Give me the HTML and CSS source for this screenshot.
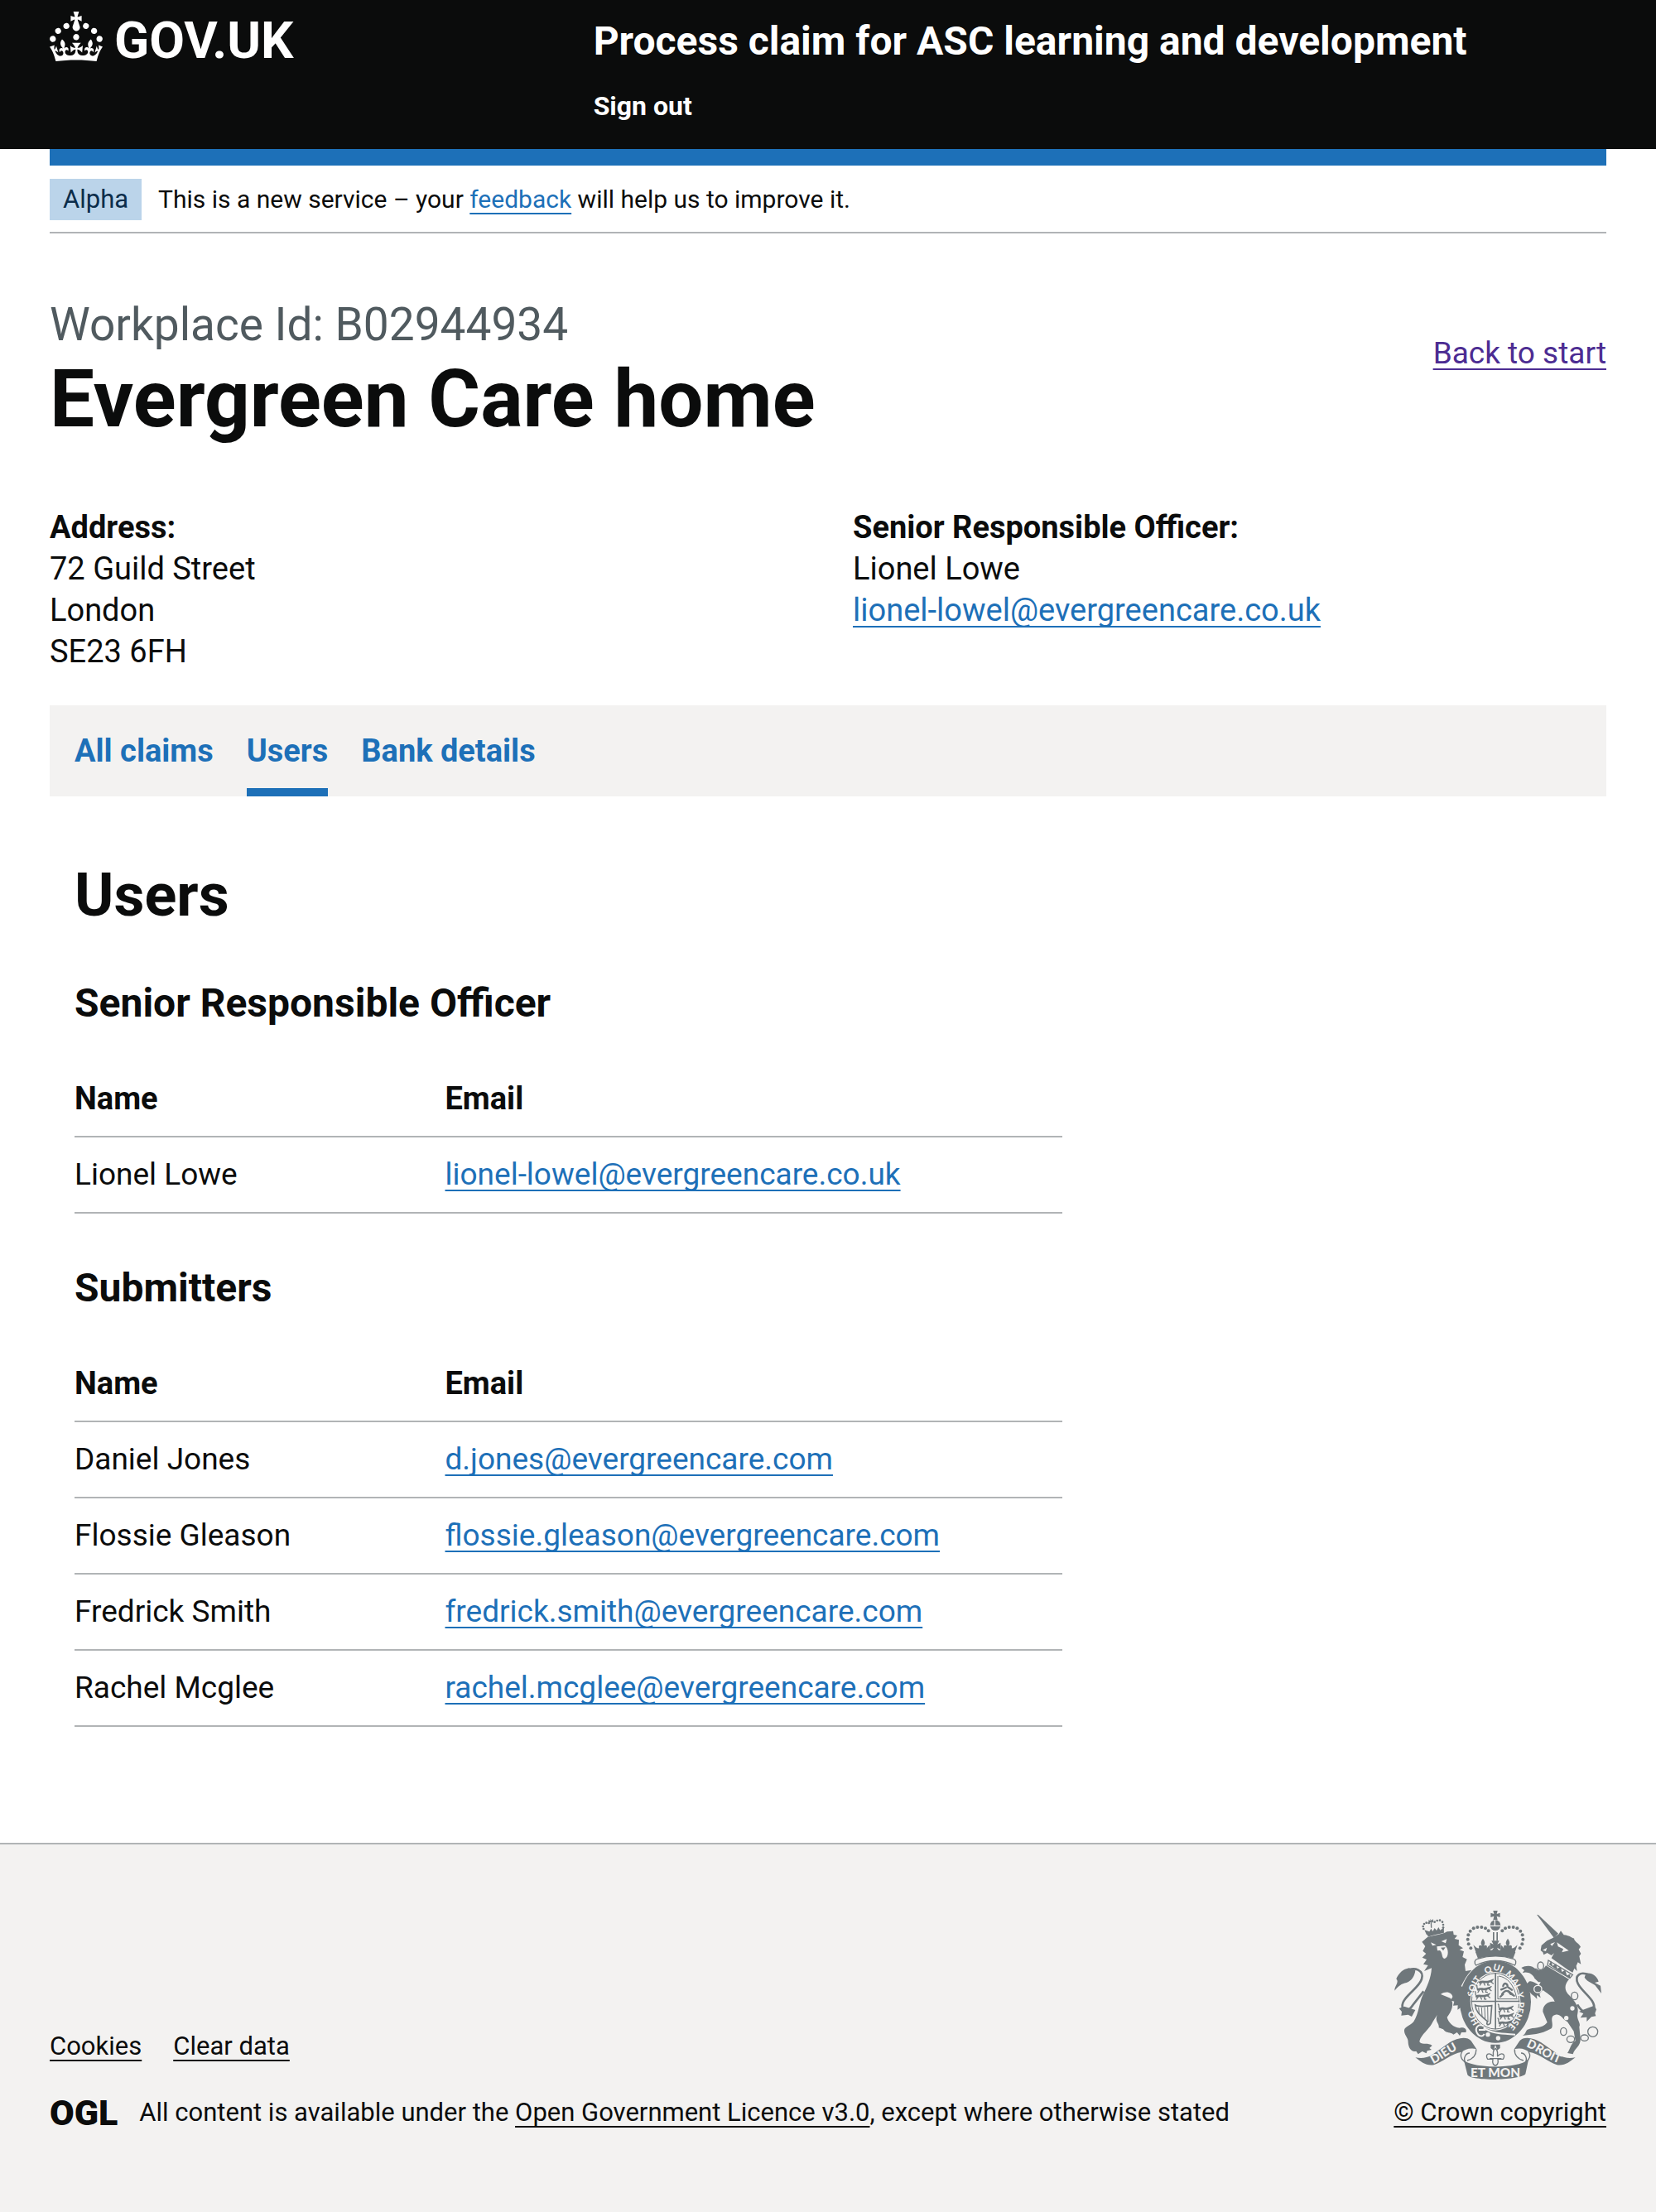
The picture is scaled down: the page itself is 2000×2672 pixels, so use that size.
FILE: index.html
```html
<!DOCTYPE html>
<html lang="en">
<head>
<meta charset="utf-8">
<meta name="viewport" content="width=device-width, initial-scale=1">
<title>Evergreen Care home – Users</title>
<link rel="stylesheet" href="styles.css">
</head>
<body>
<header class="header">
  <div class="container header-grid">
    <a class="logo" href="#">
      <svg class="crown" viewBox="0 0 32 30" aria-hidden="true"><path d="M22.6 10.4c-1 .4-2-.1-2.4-1-.4-.9.1-2 1-2.4.9-.4 2 .1 2.4 1s-.1 2-1 2.4m-5.9 6.7c-.9.4-2-.1-2.4-1-.4-.9.1-2 1-2.4.9-.4 2 .1 2.4 1s-.1 2-1 2.4m10.8-3.7c-1 .4-2-.1-2.4-1-.4-.9.1-2 1-2.4.9-.4 2 .1 2.4 1s0 2-1 2.4m3.3 4.8c-1 .4-2-.1-2.4-1-.4-.9.1-2 1-2.4.9-.4 2 .1 2.4 1s-.1 2-1 2.4M17 4.7l2.3 1.2V2.5l-2.3.7-.2-.2.9-3h-3.4l.9 3-.2.2c-.1.1-2.3-.7-2.3-.7v3.4L15 4.7c.1.1.1.2.2.2l-1.3 4c-.1.2-.1.4-.1.6 0 1.1.8 2 1.9 2.2h.7c1-.2 1.9-1.1 1.9-2.1 0-.2 0-.4-.1-.6l-1.3-4c-.1-.2 0-.2.1-.3m-7.6 5.7c.9.4 2-.1 2.4-1 .4-.9-.1-2-1-2.4-.9-.4-2 .1-2.4 1s0 2 1 2.4m-5 3c.9.4 2-.1 2.4-1 .4-.9-.1-2-1-2.4-.9-.4-2 .1-2.4 1s.1 2 1 2.4m-3.2 4.8c.9.4 2-.1 2.4-1 .4-.9-.1-2-1-2.4-.9-.4-2 .1-2.4 1s0 2 1 2.4m14.8 11c4.4 0 8.6.3 12.3.8 1.1-4.5 2.4-7 3.7-8.8l-2.5-.9c.2 1.3.3 1.9 0 2.7-.4-.4-.8-1.1-1.1-2.3l-1.2 4c.7-.5 1.3-.8 2-.9-1.1 2.5-2.6 3.1-3.5 3-1.1-.2-1.7-1.2-1.5-2.1.3-1.2 1.5-1.5 2.1-.1 1.1-2.3-.8-3-2-2.3 1.9-1.9 2.1-3.5.6-5.6-2.1 1.6-2.1 3.2-1.2 5.5-1.2-1.4-3.2-.6-2.5 1.6.9-1.4 2.1-.5 1.9.8-.2 1.1-1.7 2.1-3.5 1.9-2.7-.2-2.9-2.1-2.9-3.6.7-.1 1.9.5 2.9 1.9l.4-4.3c-1.1 1.1-2.1 1.4-3.2 1.4.4-1.2 2.1-3 2.1-3h-5.4s1.7 1.9 2.1 3c-1.1 0-2.1-.2-3.2-1.4l.4 4.3c1-1.4 2.2-2 2.9-1.9-.1 1.5-.2 3.4-2.9 3.6-1.9.2-3.4-.8-3.5-1.9-.2-1.3 1-2.2 1.9-.8.7-2.3-1.2-3-2.5-1.6.9-2.2.9-3.9-1.2-5.5-1.5 2-1.3 3.7.6 5.6-1.2-.7-3.1 0-2 2.3.6-1.4 1.8-1.1 2.1.1.2.9-.3 1.9-1.5 2.1-.9.2-2.4-.5-3.5-3 .6 0 1.2.3 2 .9l-1.2-4c-.3 1.1-.7 1.9-1.1 2.3-.3-.8-.2-1.4 0-2.7l-2.9.9C1.3 23 2.6 25.5 3.7 30c3.7-.5 7.9-.8 12.3-.8"/></svg>
      <span>GOV.UK</span>
    </a>
    <div class="header-content">
      <a class="service-name" href="#">Process claim for ASC learning and development</a>
      <nav class="header-nav" aria-label="Account"><a href="#">Sign out</a></nav>
    </div>
  </div>
</header>

<div class="container">
  <div class="phase-banner">
    <strong class="tag">Alpha</strong>
    <span>This is a new service – your <a class="link" href="#">feedback</a> will help us to improve it.</span>
  </div>

  <main class="main">
    <div class="title-row">
      <div>
        <p class="caption">Workplace Id: B02944934</p>
        <h1 class="heading-xl">Evergreen Care home</h1>
      </div>
      <a class="link link-visited" href="#">Back to start</a>
    </div>

    <div class="details">
      <p><strong>Address:</strong><br>72 Guild Street<br>London<br>SE23 6FH</p>
      <p><strong>Senior Responsible Officer:</strong><br>Lionel Lowe<br><a class="link" href="#">lionel-lowel@evergreencare.co.uk</a></p>
    </div>

    <nav class="tabs" aria-label="Workplace">
      <a href="#">All claims</a>
      <a class="current" href="#" aria-current="page">Users</a>
      <a href="#">Bank details</a>
    </nav>

    <section class="users">
      <h2 class="heading-l">Users</h2>
      <h3 class="heading-m">Senior Responsible Officer</h3>
      <table class="table">
        <thead><tr><th scope="col">Name</th><th scope="col">Email</th></tr></thead>
        <tbody>
          <tr><td>Lionel Lowe</td><td><a class="link" href="#">lionel-lowel@evergreencare.co.uk</a></td></tr>
        </tbody>
      </table>
      <h3 class="heading-m">Submitters</h3>
      <table class="table">
        <thead><tr><th scope="col">Name</th><th scope="col">Email</th></tr></thead>
        <tbody>
          <tr><td>Daniel Jones</td><td><a class="link" href="#">d.jones@evergreencare.com</a></td></tr>
          <tr><td>Flossie Gleason</td><td><a class="link" href="#">flossie.gleason@evergreencare.com</a></td></tr>
          <tr><td>Fredrick Smith</td><td><a class="link" href="#">fredrick.smith@evergreencare.com</a></td></tr>
          <tr><td>Rachel Mcglee</td><td><a class="link" href="#">rachel.mcglee@evergreencare.com</a></td></tr>
        </tbody>
      </table>
    </section>
  </main>
</div>

<footer class="footer">
  <div class="container footer-row">
    <div>
      <nav class="footer-links" aria-label="Support links"><a href="#">Cookies</a><a href="#">Clear data</a></nav>
      <div class="licence">
        <span class="ogl">OGL</span>
        <span>All content is available under the <a href="#">Open Government Licence v3.0</a>, except where otherwise stated</span>
      </div>
    </div>
    <a class="copyright" href="#">
      <svg class="arms" viewBox="69 54 753 612" aria-hidden="true">
        <defs>
          <path id="garter" d="M438 501A102 118 0 0 1 438 270A102 118 0 0 1 438 501"/>
          <path id="dieu" d="M213 609C248 594 276 564 318 551"/>
          <path id="droit" d="M549 547C590 561 625 595 676 610"/>
          <g id="ribbon">
            <path d="M148 586C170 591 190 588 208 577L272 532C300 514 335 508 350 526L370 556C345 550 330 556 316 566C280 572 245 602 215 613C185 617 170 602 148 586Z"/>
            <path d="M318 564C308 580 312 592 330 604M368 556C370 575 358 592 336 597M330 604C320 590 330 570 345 570" fill="none" stroke="#6f777b" stroke-width="4"/>
          </g>
          <g id="arch">
            <circle cx="349" cy="190" r="6"/><circle cx="341" cy="175" r="6"/><circle cx="338" cy="158" r="6"/><circle cx="340" cy="142" r="6"/><circle cx="347" cy="128" r="6"/><circle cx="359" cy="118" r="6"/><circle cx="373" cy="114" r="6"/><circle cx="388" cy="114" r="6"/><circle cx="402" cy="118" r="6"/><circle cx="413" cy="127" r="6"/>
            <path d="M393 155C384 168 385 174 390 181C380 176 376 182 379 190C370 192 366 185 358 178L368 207H438V196L420 199L418 178C411 184 408 190 407 191C410 181 405 176 396 181C402 172 401 167 393 155Z"/>
          </g>
          <g id="leopard" fill="none" stroke="#6f777b" stroke-linecap="round">
            <path d="M2 10C12 3 22 12 34 7L44 4" stroke-width="8"/>
            <path d="M7 12L2 20M16 11L20 20M32 9L30 19L36 20M41 7L50 14M2 9C-6 2 2-6-4-8M44 3L50-1" stroke-width="4"/>
          </g>
        </defs>
        <g fill="#6f777b">
          <ellipse cx="438" cy="384" rx="129" ry="149"/>
          <ellipse cx="438" cy="382" rx="91" ry="106" fill="#f3f2f1"/>
          <ellipse cx="438" cy="382" rx="86" ry="101" fill="none" stroke="#6f777b" stroke-width="3"/>
          <path d="M436 280H441V484H436ZM350 380H526V385H350Z"/>
          <path d="M447 375V291M447 374H518M450 291C480 295 505 320 515 370" fill="none" stroke="#6f777b" stroke-width="3"/>
          <use href="#leopard" x="380" y="304"/><use href="#leopard" x="373" y="330"/><use href="#leopard" x="368" y="355"/>
          <use href="#leopard" x="452" y="401"/><use href="#leopard" x="454" y="427"/><use href="#leopard" x="451" y="452"/>
          <path d="M462 357C474 340 484 342 493 356M466 327C470 312 483 318 482 330L498 341M476 333L459 340M484 345L500 357M466 357L456 366M493 355L506 362" fill="none" stroke="#6f777b" stroke-width="7" stroke-linecap="round"/>
          <path d="M365 396C380 405 401 400 425 398L420 462C410 472 403 464 410 456C390 437 367 424 365 396Z" fill="none" stroke="#6f777b" stroke-width="5"/>
          <path d="M377 404L379 425M388 405L390 438M399 404L401 448M410 402L411 456" stroke="#6f777b" stroke-width="3"/>
          <g fill="#f3f2f1" class="motto garter-text" text-anchor="middle">
            <text><textPath href="#garter" startOffset="16%">HO</textPath></text>
            <text><textPath href="#garter" startOffset="34%">SOIT</textPath></text>
            <text><textPath href="#garter" startOffset="49%">QUI</textPath></text>
            <text><textPath href="#garter" startOffset="62%">MAL</textPath></text>
            <text><textPath href="#garter" startOffset="71%">Y</textPath></text>
            <text><textPath href="#garter" startOffset="83%">PENSE</textPath></text>
            <circle cx="411" cy="503" r="8"/><circle cx="448" cy="516" r="8"/>
          </g>
          <path d="M395 472C375 462 362 480 372 498C378 510 392 512 398 501M378 486H402M395 478C428 502 470 500 510 503" fill="none" stroke="#f3f2f1" stroke-width="6"/>

          <use href="#arch"/>
          <use href="#arch" transform="translate(876 0) scale(-1 1)"/>
          <path d="M430 54H446L443 66L455 62V78L443 74L446 88H430L433 74L421 78V62L433 66Z"/>
          <path d="M429 132H434V163H429ZM442 132H447V163H442Z"/>
          <circle cx="438" cy="107" r="19"/>
          <path d="M436 87V108M418 109H458" stroke="#f3f2f1" stroke-width="4"/>
          <path d="M424 163H452L445 176L457 170V195L444 188L452 202H424L432 188L419 195V170L431 176Z"/>
          <path d="M366 204C410 194 466 194 511 204L501 230C460 216 416 216 376 230Z"/>
          <path d="M372 229C414 216 464 216 504 229C513 231 515 244 508 252C466 230 410 230 368 252C360 243 363 231 372 229Z" fill="#f3f2f1" stroke="#6f777b" stroke-width="4"/>

          <g>
            <path d="M191 151L172 167L184 183L175 200L187 210L173 224L189 231L177 248L194 252L180 273L207 262C205 300 190 330 175 360C163 384 160 428 142 456C130 471 105 474 108 492C110 508 123 515 122 532C123 552 135 569 151 563L158 574L173 564L188 571L191 562L207 558L199 552L209 543C195 531 175 541 164 531C160 514 195 485 207 465C213 453 221 441 227 432C217 456 236 462 233 478L249 484C261 501 276 493 286 503L299 495L309 507L315 495L331 495C337 483 324 474 309 479C285 477 267 458 263 440C279 420 291 390 275 371L240 357C261 342 282 352 283 367L275 379L289 383L285 398L302 397L301 413L316 403L324 414L336 401L346 405C348 370 338 345 314 327C324 307 334 288 352 269L330 273L327 250L335 230L319 222L324 202L308 196L321 190L305 179L306 160L290 156L300 144L287 141L285 128L263 130C240 143 215 142 191 151Z"/>
            <path d="M204 169L224 178L210 181ZM242 165L262 157L258 172ZM226 184L255 181C270 190 270 225 254 228C242 226 248 207 237 198L228 199Z" fill="#f3f2f1"/>
            <path d="M240 188L257 187L249 199Z"/>
            <path d="M190 134L250 124L252 134C230 139 210 142 194 149Z"/>
            <g><circle cx="178" cy="120" r="4"/><circle cx="176" cy="111" r="4"/><circle cx="180" cy="102" r="4"/><circle cx="188" cy="98" r="4"/><circle cx="197" cy="99" r="4"/><circle cx="218" cy="95" r="4"/><circle cx="227" cy="90" r="4"/><circle cx="237" cy="89" r="4"/><circle cx="246" cy="95" r="4"/><circle cx="249" cy="105" r="4"/><circle cx="249" cy="115" r="4"/></g>
            <path d="M181 124L189 142L251 131L252 114L238 125L232 114L225 126L218 117L211 129L205 119L199 130ZM202 83L207 90L213 84V98L207 94L208 116H204L203 95L196 99L196 88L203 91Z"/>
            <path d="M73 344C72 326 91 315 79 301C88 280 104 266 125 262L148 270C146 290 136 308 116 315C98 318 86 328 73 344Z"/>
            <path d="M108 276C148 252 181 272 171 302C162 335 97 369 101 402C104 424 126 417 139 396L178 346" fill="none" stroke="#6f777b" stroke-width="8"/>
            <path d="M108 401L89 408L99 420L97 434L122 431L135 438L148 414Z"/>
          </g>

          <g>
            <path d="M588 68L594 70L666 137L650 152Z"/>
            <path d="M646 153L668 139L675 127L686 142C710 144 719 157 723 154C723 166 741 173 747 185L740 194L748 210L742 219L748 248L737 241L731 254L734 273L724 263L718 278L700 268L641 226L651 208L641 216L626 207L613 214L610 205L602 198L605 180L625 163Z"/>
            <path d="M637 175L654 168L643 182ZM609 197L625 188L621 201ZM661 169L665 184L684 193L679 205L704 199" fill="#f3f2f1"/>
            <path d="M630 234L718 286L708 298L627 252Z" fill="none" stroke="#6f777b" stroke-width="4"/>
            <path d="M632 249L640 236L645 254L658 247L662 264L675 258L679 276L691 269L697 289L710 283L707 300Z"/>
            <path d="M621 253C608 275 600 270 586 268C570 250 550 252 532 261L543 270L536 280C552 273 573 282 580 299L594 313L602 313L596 325C580 313 564 304 557 314L548 322L552 333L550 347C563 342 564 356 577 362L589 374L588 360L602 370L598 355L610 342C634 359 648 367 653 384C630 380 609 397 610 420L626 459C605 484 577 475 554 485C547 490 549 500 536 507C570 502 600 505 641 481C653 466 630 437 656 431C677 429 681 448 699 457L722 491L728 526C710 536 711 554 699 570L719 574C725 552 749 545 746 516L742 475C750 463 730 447 736 426C744 395 714 371 699 353C686 335 692 317 705 303Z"/>
            <path d="M822 354L819 326L798 315L812 311C807 291 788 277 766 281L761 296C769 310 786 315 799 324Z"/>
            <path d="M779 288C745 271 724 290 737 318C752 350 803 377 795 410C786 434 755 430 735 394" fill="none" stroke="#6f777b" stroke-width="8"/>
            <path d="M796 398L804 412L799 426L802 436L786 439L769 456L769 440L746 442L757 427L741 420L754 414Z"/>
            <g fill="none" stroke="#6f777b" stroke-width="4">
              <ellipse cx="602" cy="254" rx="11" ry="14"/><ellipse cx="584" cy="277" rx="9" ry="12"/><ellipse cx="592" cy="338" rx="14" ry="13" stroke="#f3f2f1"/><ellipse cx="725" cy="363" rx="12" ry="14"/><ellipse cx="685" cy="492" rx="11" ry="14"/><ellipse cx="711" cy="520" rx="14" ry="12"/><ellipse cx="761" cy="515" rx="14" ry="11"/><circle cx="791" cy="493" r="18"/>
            </g>
            <circle cx="717" cy="408" r="8" fill="#f3f2f1"/><circle cx="695" cy="443" r="8" fill="#f3f2f1"/>
          </g>

          <use href="#ribbon"/>
          <use href="#ribbon" transform="translate(876 0) scale(-1 1)"/>
          <path d="M324 597C365 626 515 628 558 594L547 646C532 669 346 673 337 649Z"/>
          <path d="M421 539H455V552L445 560L438 540L431 560L421 552Z"/>
          <path d="M438 553C424 567 433 575 430 581C414 565 399 575 410 592H429C426 608 432 615 438 615S450 608 447 592H466C477 575 462 565 446 581C443 575 452 567 438 553ZM417 590H460" fill="none" stroke="#6f777b" stroke-width="4"/>
          <g class="motto" fill="#f3f2f1">
            <text class="scroll-text"><textPath href="#dieu">DIEU</textPath></text>
            <text class="scroll-text"><textPath href="#droit">DROIT</textPath></text>
            <text class="banner-text" x="438" y="657" text-anchor="middle">ET MON</text>
          </g>
        </g>
      </svg>
      <span>© Crown copyright</span>
    </a>
  </div>
</footer>
</body>
</html>
```
FILE: styles.css
```css
* { box-sizing: border-box; }
html { background: #f3f2f1; }
body { margin: 0; background: #fff; color: #0b0c0c; font: 38px/50px Roboto, "Liberation Sans", sans-serif; }
h1, h2, h3, p { margin: 0; }
a { text-decoration-thickness: 2px; text-underline-offset: 6px; text-decoration-skip-ink: none; }
.container { margin: 0 60px; }

.header { background: #0b0c0c; color: #fff; padding-bottom: 32px; display: flow-root; }
.header a { color: #fff; text-decoration: none; }
.header-grid { display: grid; grid-template-columns: 1fr 2fr; }
.logo { display: flex; gap: 14px; padding-top: 14px; font-size: 62px; line-height: 70px; font-weight: 700; }
.crown { width: 64px; height: 60px; fill: #fff; }
.header-content { padding: 20px 0 0 30px; font-weight: 700; }
.service-name { display: block; font-size: 48px; line-height: 60px; }
.header-nav { margin-top: 28px; font-size: 32px; line-height: 40px; }

.phase-banner { display: flex; align-items: center; gap: 20px; border-top: 20px solid #1d70b8; border-bottom: 2px solid #b1b4b6; padding: 16px 0 14px; font-size: 30px; line-height: 40px; }
.tag { background: #bbd4ea; color: #0c2d4a; font-size: 31px; font-weight: 400; padding: 5px 16px; }

.link { color: #1d70b8; }
.link-visited { color: #4c2c92; }

.main { padding: 80px 0 140px; }
.title-row { display: flex; justify-content: space-between; align-items: flex-start; }
.title-row .link { margin-top: 40px; font-size: 37px; }
.caption { color: #505a5f; font-size: 55px; line-height: 60px; margin-bottom: 10px; }
.heading-xl { font-size: 96px; line-height: 100px; }
.heading-l { font-size: 72px; line-height: 80px; margin-bottom: 60px; }
.heading-m { font-size: 48px; line-height: 60px; margin-bottom: 40px; }
.details { display: grid; grid-template-columns: 1fr 1fr; gap: 60px; margin: 80px 0 40px; }

.tabs { display: flex; gap: 40px; padding: 0 30px; background: #f3f2f1; font-weight: 700; }
.tabs a { color: #1d70b8; text-decoration: none; padding: 30px 0 20px; border-bottom: 10px solid transparent; }
.tabs .current { border-color: #1d70b8; }

.users { padding: 80px 30px 0; }
.table { width: calc((100% + 60px) * 2 / 3 - 60px); table-layout: fixed; border-collapse: separate; border-spacing: 0; margin-bottom: 60px; }
.table:last-child { margin-bottom: 0; }
.table th, .table td { text-align: left; padding: 20px 0; border-bottom: 2px solid #b1b4b6; }
.table td { font-size: 37px; }
.table th:first-child { width: 37.5%; }

.footer { border-top: 2px solid #b1b4b6; background: #f3f2f1; padding: 80px 0 96px; font-size: 31px; line-height: 40px; }
.footer a { color: #0b0c0c; }
.footer-row { display: flex; justify-content: space-between; align-items: flex-end; }
.footer-links { display: flex; gap: 38px; margin-bottom: 40px; }
.licence { display: flex; gap: 26px; }
.ogl { font-size: 43px; font-weight: 900; }
.copyright { display: flex; flex-direction: column; align-items: flex-end; gap: 20px; }
.arms { width: 251px; height: 204px; margin-right: 6px; }
.motto { font-family: Lato, sans-serif; font-weight: 900; }
.garter-text { font-size: 32px; }
.scroll-text { font-size: 43px; }
.banner-text { font-size: 46px; }
```
